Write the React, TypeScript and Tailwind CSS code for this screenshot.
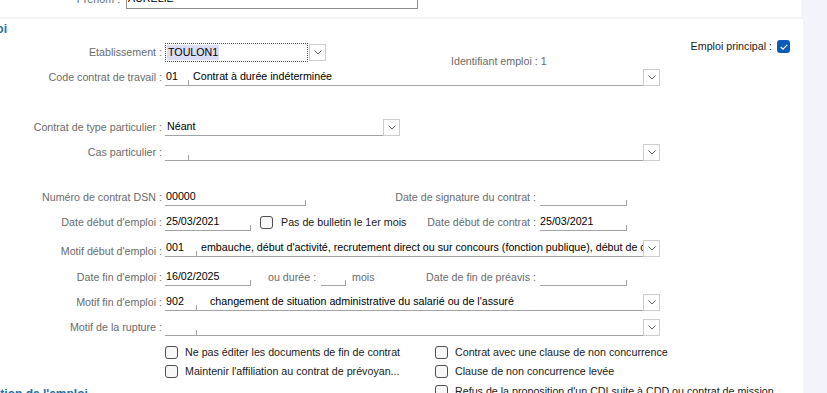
import React from "react";

const labelCls = "w-[162px] shrink-0 whitespace-nowrap text-right text-[#6b6b6b]";
const sideLabelCls = "w-[166px] shrink-0 whitespace-nowrap text-right text-[#6b6b6b]";

function Chevron() {
  return (
    <svg width="8" height="5" viewBox="0 0 8 5" fill="none">
      <path d="M0.5 0.5L4 4L7.5 0.5" stroke="#5f5f5f" strokeWidth="1" />
    </svg>
  );
}

function DropBtn({ className = "" }: { className?: string }) {
  return (
    <div className={`flex h-[17px] w-[17px] shrink-0 items-center justify-center border border-[#cdcdcd] bg-white ${className}`}>
      <Chevron />
    </div>
  );
}

function Field({
  className = "",
  value = "",
  tick = true,
  textCls = "",
}: {
  className?: string;
  value?: string;
  tick?: boolean;
  textCls?: string;
}) {
  return (
    <div className={`flex h-[18px] shrink-0 items-center border-b border-[#a3a3a3] ${className}`}>
      <span className={`min-w-0 flex-1 overflow-hidden whitespace-nowrap text-black ${textCls}`}>{value}</span>
      {tick && <span className="h-[5px] w-px shrink-0 self-end bg-[#a3a3a3]" />}
    </div>
  );
}

function Box({ checked = false }: { checked?: boolean }) {
  if (checked) {
    return (
      <span className="flex h-[13px] w-[13px] shrink-0 items-center justify-center rounded-[3px] bg-[#0b5cb9]">
        <svg width="8" height="6" viewBox="0 0 8 6" fill="none">
          <path d="M0.8 3L3 5.2L7.2 0.8" stroke="white" strokeWidth="1.1" />
        </svg>
      </span>
    );
  }
  return <span className="h-[13px] w-[13px] shrink-0 rounded-[3px] border border-[#4f4f4f] bg-[#f7f7f7]" />;
}

export default function App() {
  return (
    <div className="h-[393px] w-[827px] overflow-hidden bg-[#f3f3fb] font-['Liberation_Sans',Arial,sans-serif] text-[10.7px] leading-[13px]">
      {/* bandeau identité (coupé en haut) */}
      <div className="h-[17px] w-[801px] overflow-hidden bg-white">
        <div className="-mt-[11px] flex h-[20px] items-center">
          <div className="w-[120px] shrink-0 text-right text-[#6b6b6b]">Prénom :</div>
          <div className="ml-[6px] flex h-[20px] w-[292px] items-center border-x border-b border-[#8c8c8c] pl-[1px] text-black">
            AURELIE
          </div>
        </div>
      </div>

      <div className="mt-[2px] h-[374px] w-[803px] overflow-hidden bg-white">
        <div className="-ml-[33px] flex h-[20px] items-center text-[12px] font-bold text-[#1d6fa5]">Emploi</div>

        {/* Etablissement */}
        <div className="mt-px flex h-[24px] items-center">
          <div className={labelCls}>Etablissement :</div>
          <div className="ml-[3px] flex h-[19px] w-[143px] shrink-0 items-center border border-dotted border-[#505050] pl-px">
            <span className="bg-[#dcdcf6] px-px leading-[15px] text-black">TOULON1</span>
          </div>
          <DropBtn className="ml-px" />
          <div className="-mb-[4px] ml-[125px] self-end whitespace-nowrap text-[#6b6b6b]">Identifiant emploi : 1</div>
          <div className="ml-auto mr-[13px] flex items-center gap-[5px] self-start whitespace-nowrap text-[#1a1a1a]">
            Emploi principal :
            <Box checked />
          </div>
        </div>

        {/* Code contrat */}
        <div className="mt-px flex h-[24px] items-center">
          <div className={labelCls}>Code contrat de travail :</div>
          <Field className="ml-[3px] w-[24px]" value="01" textCls="pl-px" />
          <Field className="w-[454px]" value="Contrat à durée indéterminée" tick={false} textCls="pl-[4px]" />
          <DropBtn className="mb-[3px] self-end" />
        </div>

        {/* Contrat de type particulier */}
        <div className="mt-[26px] flex h-[24px] items-center">
          <div className={labelCls}>Contrat de type particulier :</div>
          <Field className="ml-[3px] w-[218px]" value="Néant" tick={false} textCls="pl-[2px]" />
          <DropBtn className="mb-[3px] self-end" />
        </div>

        {/* Cas particulier */}
        <div className="mt-px flex h-[24px] items-center">
          <div className={labelCls}>Cas particulier :</div>
          <Field className="ml-[3px] w-[24px]" />
          <Field className="w-[454px]" tick={false} />
          <DropBtn className="mb-[3px] self-end" />
        </div>

        {/* Numéro DSN */}
        <div className="mt-[21px] flex h-[24px] items-center">
          <div className="flex w-[370px] shrink-0 items-center">
            <div className={labelCls}>Numéro de contrat DSN :</div>
            <Field className="ml-[3px] w-[141px]" value="00000" textCls="pl-px" />
          </div>
          <div className={sideLabelCls}>Date de signature du contrat :</div>
          <Field className="ml-[4px] w-[87px]" />
        </div>

        {/* Date début d'emploi */}
        <div className="mt-px flex h-[24px] items-center">
          <div className="flex w-[370px] shrink-0 items-center">
            <div className={labelCls}>Date début d'emploi :</div>
            <Field className="ml-[3px] w-[86px]" value="25/03/2021" textCls="pl-px" />
            <div className="ml-[9px] flex items-center gap-[8px] whitespace-nowrap text-[#1a1a1a]">
              <Box />
              Pas de bulletin le 1er mois
            </div>
          </div>
          <div className={sideLabelCls}>Date début de contrat :</div>
          <Field className="ml-[4px] w-[87px]" value="25/03/2021" />
        </div>

        {/* Motif début d'emploi */}
        <div className="mt-[2px] flex h-[24px] items-center">
          <div className={`${labelCls} pt-[7px]`}>Motif début d'emploi :</div>
          <Field className="ml-[3px] w-[32px]" value="001" textCls="pl-px" />
          <Field
            className="w-[446px]"
            value="embauche, début d'activité, recrutement direct ou sur concours (fonction publique), début de contrat de travail"
            tick={false}
            textCls="pl-[4px]"
          />
          <DropBtn className="mb-[3px] self-end" />
        </div>

        {/* Date fin d'emploi */}
        <div className="mt-[5px] flex h-[24px] items-center">
          <div className="flex w-[370px] shrink-0 items-center">
            <div className={labelCls}>Date fin d'emploi :</div>
            <Field className="ml-[3px] w-[86px]" value="16/02/2025" textCls="pl-px" />
            <div className="ml-[17px] w-[53px] shrink-0 whitespace-nowrap text-[#6b6b6b]">ou durée :</div>
            <Field className="w-[25px]" />
            <div className="ml-[6px] text-[#6b6b6b]">mois</div>
          </div>
          <div className={sideLabelCls}>Date de fin de préavis :</div>
          <Field className="ml-[4px] w-[87px]" />
        </div>

        {/* Motif fin d'emploi */}
        <div className="mt-px flex h-[24px] items-center">
          <div className={labelCls}>Motif fin d'emploi :</div>
          <Field className="ml-[3px] w-[32px]" value="902" textCls="pl-px" />
          <Field
            className="w-[446px]"
            value="changement de situation administrative du salarié ou de l'assuré"
            tick={false}
            textCls="pl-[13px]"
          />
          <DropBtn className="mb-[3px] self-end" />
        </div>

        {/* Motif de la rupture */}
        <div className="mt-px flex h-[24px] items-center">
          <div className={labelCls}>Motif de la rupture :</div>
          <Field className="ml-[3px] w-[32px]" />
          <Field className="w-[446px]" tick={false} />
          <DropBtn className="mb-[3px] self-end" />
        </div>

        {/* cases à cocher */}
        <div className="mt-[3px] flex h-[20px] items-center text-[#1a1a1a]">
          <div className="ml-[165px] flex w-[270px] shrink-0 items-center gap-[7px] whitespace-nowrap">
            <Box />
            Ne pas éditer les documents de fin de contrat
          </div>
          <div className="flex items-center gap-[7px] whitespace-nowrap">
            <Box />
            Contrat avec une clause de non concurrence
          </div>
        </div>
        <div className="flex h-[19px] items-center text-[#1a1a1a]">
          <div className="ml-[165px] flex w-[270px] shrink-0 items-center gap-[7px] whitespace-nowrap">
            <Box />
            Maintenir l'affiliation au contrat de prévoyan...
          </div>
          <div className="flex items-center gap-[7px] whitespace-nowrap">
            <Box />
            Clause de non concurrence levée
          </div>
        </div>
        <div className="flex h-[20px] items-center text-[#1a1a1a]">
          <div className="-ml-[33px] mt-[6px] w-[468px] shrink-0 self-start whitespace-nowrap text-[12px] font-bold leading-[14px] text-[#1d6fa5]">
            Définition de l'emploi
          </div>
          <div className="flex items-center gap-[7px] whitespace-nowrap">
            <Box />
            Refus de la proposition d'un CDI suite à CDD ou contrat de mission
          </div>
        </div>
      </div>
    </div>
  );
}
